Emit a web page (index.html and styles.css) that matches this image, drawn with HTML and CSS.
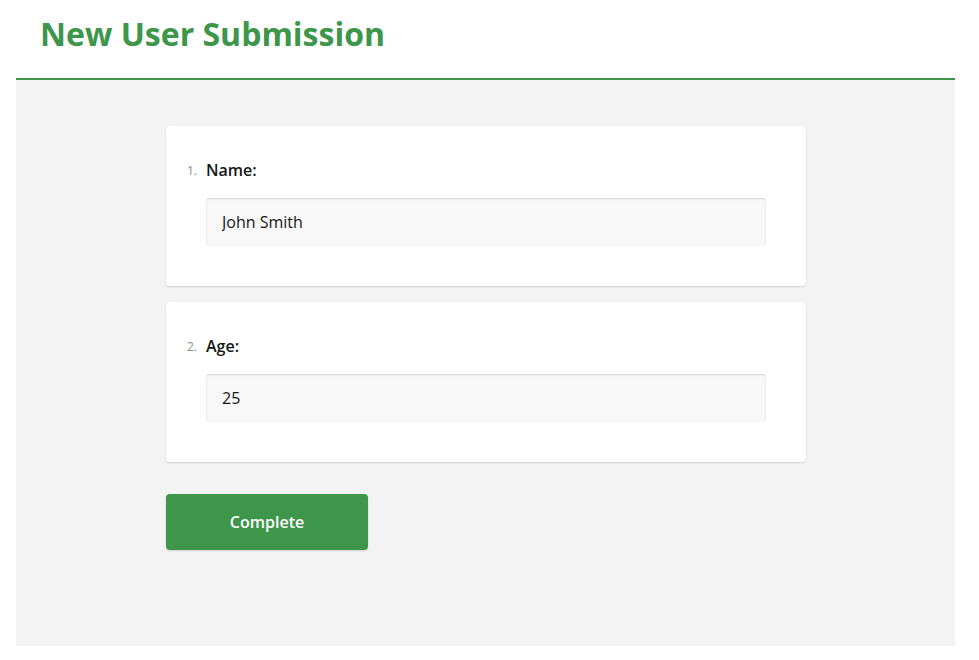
FILE: index.html
```html
<!DOCTYPE html>
<html lang="en">
<head>
    <meta charset="UTF-8">
    <meta name="viewport" content="width=device-width, initial-scale=1.0">
    <title>New User Submission</title>
    <link rel="stylesheet" href="styles.css">
</head>
<body>
    <div class="survey">
        <div class="survey-header">
            <h3 class="survey-title">New User Submission</h3>
        </div>
        <div class="survey-body">
            <div class="page">
                <div class="question">
                    <h5 class="question-title">
                        <span class="question-num">1.</span>
                        <span class="question-text">Name:</span>
                    </h5>
                    <input type="text" class="question-input" value="John Smith">
                </div>
                <div class="question">
                    <h5 class="question-title">
                        <span class="question-num">2.</span>
                        <span class="question-text">Age:</span>
                    </h5>
                    <input type="text" class="question-input" value="25">
                </div>
                <div class="nav">
                    <button class="complete-btn">Complete</button>
                </div>
            </div>
        </div>
    </div>
</body>
</html>
```

FILE: styles.css
```css
body {
    font-family: "Open Sans", sans-serif;
    margin: 0;
    padding: 0;
    background-color: #fff;
    color: #161616;
}

.survey {
    margin: 0 24px 14px 16px;
}

.survey-header {
    height: 78px;
    border-bottom: 2px solid #3d964a;
    padding-left: 24px;
}

.survey-title {
    margin: 0;
    padding-top: 12px;
    font-size: 32px;
    line-height: 44px;
    font-weight: 700;
    color: #3d964a;
}

.survey-body {
    background-color: #f3f3f3;
    height: 566px;
    box-sizing: border-box;
    padding-top: 46px;
}

.page {
    width: 640px;
    margin-left: 150px;
}

.question {
    background-color: #fff;
    border-radius: 4px;
    box-shadow: 0 1px 2px rgba(0, 0, 0, 0.15);
    padding: 32px 40px 40px 40px;
    margin-bottom: 16px;
}

.question-title {
    position: relative;
    margin: 0 0 16px 0;
    font-size: 16px;
    line-height: 24px;
    font-weight: 600;
}

.question-num {
    position: absolute;
    left: -19px;
    top: 1px;
    font-size: 12px;
    font-weight: 400;
    color: #8f8a86;
}

.question-input {
    display: block;
    width: 100%;
    height: 48px;
    box-sizing: border-box;
    padding: 0 16px;
    font-family: "Open Sans", sans-serif;
    font-size: 16px;
    color: #161616;
    background-color: #f8f8f8;
    border: none;
    border-radius: 3px;
    box-shadow: inset 0 1px 2px rgba(0, 0, 0, 0.15);
}

.nav {
    padding-top: 16px;
}

.complete-btn {
    width: 202px;
    height: 56px;
    font-family: "Open Sans", sans-serif;
    font-size: 16px;
    font-weight: 600;
    color: #fff;
    background-color: #3d964a;
    border: none;
    border-radius: 4px;
    box-shadow: 0 1px 2px rgba(0, 0, 0, 0.15);
    cursor: pointer;
}
```
